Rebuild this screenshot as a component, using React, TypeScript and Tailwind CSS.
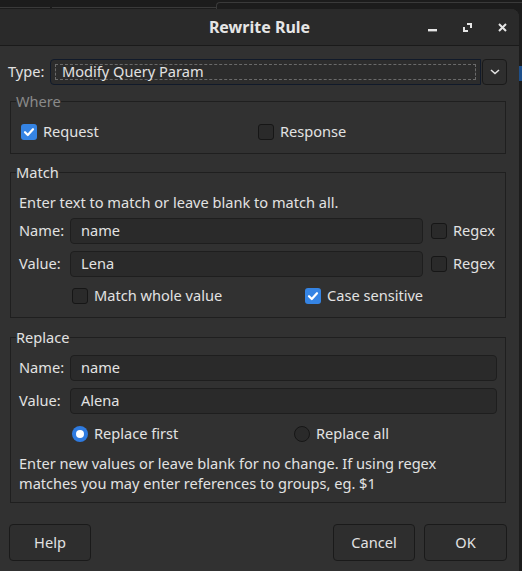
import React from 'react';

const font = { fontFamily: '"Noto Sans", "Open Sans", sans-serif' };

const CheckBox: React.FC<{ checked?: boolean }> = ({ checked }) =>
  checked ? (
    <span className="flex h-[16px] w-[16px] shrink-0 items-center justify-center rounded-[3px] bg-[#3584e4]">
      <svg width="12" height="12" viewBox="0 0 12 12">
        <path d="M2 6.2 L4.8 9 L10 3.2" fill="none" stroke="#ffffff" strokeWidth="2.2" strokeLinecap="round" strokeLinejoin="round" />
      </svg>
    </span>
  ) : (
    <span className="h-[16px] w-[16px] shrink-0 rounded-[3px] border border-[#161616] bg-[#2a2a2a]" />
  );

const Radio: React.FC<{ checked?: boolean }> = ({ checked }) =>
  checked ? (
    <span className="flex h-[16px] w-[16px] shrink-0 items-center justify-center rounded-full bg-[#2f7be0]">
      <span className="h-[8px] w-[8px] rounded-full bg-white" />
    </span>
  ) : (
    <span className="h-[16px] w-[16px] shrink-0 rounded-full border border-[#161616] bg-[#2a2a2a]" />
  );

const Field: React.FC<{ value: string; className: string }> = ({ value, className }) => (
  <div className={`flex h-[26px] items-center rounded-[4px] border border-[#1e1e1e] bg-[#2a2a2a] pl-[10px] ${className}`}>
    {value}
  </div>
);

const Group: React.FC<{ title: string; dim?: boolean; className?: string; children: React.ReactNode }> = ({ title, dim, className, children }) => (
  <fieldset className={`ml-[10px] w-[496px] border border-[#1f1f1f] ${className ?? ''}`}>
    <legend className={`ml-[5px] px-0 leading-[19px] ${dim ? 'text-[#8a8a8a]' : 'text-[#e2e2e2]'}`}>{title}</legend>
    {children}
  </fieldset>
);

export default function App() {
  return (
    <div className="flex h-[571px] w-[522px] flex-col overflow-hidden bg-[#1c1c1c] text-[14.6px] text-[#e2e2e2]" style={font}>
      {/* window behind */}
      <div className="flex h-[9px] shrink-0">
        <div className="mt-[7px] h-px w-[50px] bg-[#3a3a3a]" />
        <div className="ml-[2px] mt-[7px] h-px w-[164px] bg-[#3a3a3a]" />
        <div className="mt-[2px] h-[7px] flex-1 rounded-tl-[4px] border-l border-t border-[#3a3a3a]" />
      </div>

      <div className="flex min-h-0 flex-1">
        <div className="flex w-[519px] flex-col overflow-hidden rounded-tr-[8px] bg-[#313131]">
          {/* title bar */}
          <div className="relative flex h-[37px] shrink-0 items-center justify-center border-b border-[#1a1a1a] bg-[#2a2a2a]">
            <span className="text-[16px] font-bold text-[#e6e6e6]">Rewrite Rule</span>
            <div className="absolute right-[12px] top-0 flex h-[36px] items-center gap-[26px]">
              <svg width="9" height="9" viewBox="0 0 9 9">
                <rect x="0" y="6" width="9" height="2.4" fill="#e6e6e6" />
              </svg>
              <svg width="9" height="9" viewBox="0 0 9 9">
                <path d="M4 1 H8 V5" fill="none" stroke="#e6e6e6" strokeWidth="2" />
                <path d="M1 4 V8 H5" fill="none" stroke="#e6e6e6" strokeWidth="2" />
              </svg>
              <svg width="9" height="9" viewBox="0 0 9 9">
                <path d="M1 1 L8 8 M8 1 L1 8" stroke="#e6e6e6" strokeWidth="2" />
              </svg>
            </div>
          </div>

          {/* type row */}
          <div className="mt-[13px] flex h-[26px] items-center pl-[8px]">
            <span className="w-[42px]">Type:</span>
            <div className="flex h-[26px] w-[431px] items-center rounded-l-[4px] border border-[#111a2a] bg-[#2c2c2c] px-[4px]">
              <div className="flex h-[16px] flex-1 items-center border border-dashed border-[#6a6a6a] pl-[6px]">
                Modify Query Param
              </div>
            </div>
            <div className="ml-px flex h-[26px] w-[25px] items-center justify-center rounded-[4px] border border-[#1a1a1a] bg-[#2e2e2e]">
              <svg width="10" height="6" viewBox="0 0 10 6">
                <path d="M1 1 L5 4.5 L9 1" fill="none" stroke="#e2e2e2" strokeWidth="1.6" />
              </svg>
            </div>
          </div>

          {/* where */}
          <Group title="Where" dim className="mt-[7px]">
            <div className="flex h-[42px] items-center pl-[10px]">
              <label className="flex w-[237px] items-center gap-[6px]">
                <CheckBox checked />
                Request
              </label>
              <label className="flex items-center gap-[6px]">
                <CheckBox />
                Response
              </label>
            </div>
          </Group>

          {/* match */}
          <Group title="Match" className="mt-[9px]">
            <div className="flex flex-col px-[8px] pb-[12px] pt-[10px]">
              <div className="leading-[20px]">Enter text to match or leave blank to match all.</div>
              <div className="mt-[6px] flex items-center">
                <span className="w-[51px]">Name:</span>
                <Field value="name" className="w-[353px]" />
                <label className="ml-[8px] flex items-center gap-[6px]">
                  <CheckBox />
                  Regex
                </label>
              </div>
              <div className="mt-[7px] flex items-center">
                <span className="w-[51px]">Value:</span>
                <Field value="Lena" className="w-[353px]" />
                <label className="ml-[8px] flex items-center gap-[6px]">
                  <CheckBox />
                  Regex
                </label>
              </div>
              <div className="mt-[10px] flex h-[18px] items-center pl-[53px]">
                <label className="flex w-[233px] items-center gap-[6px]">
                  <CheckBox />
                  Match whole value
                </label>
                <label className="flex items-center gap-[6px]">
                  <CheckBox checked />
                  Case sensitive
                </label>
              </div>
            </div>
          </Group>

          {/* replace */}
          <Group title="Replace" className="mt-[10px]">
            <div className="flex flex-col px-[8px] pb-[9px] pt-[8px]">
              <div className="flex items-center">
                <span className="w-[51px]">Name:</span>
                <Field value="name" className="w-[427px]" />
              </div>
              <div className="mt-[7px] flex items-center">
                <span className="w-[51px]">Value:</span>
                <Field value="Alena" className="w-[427px]" />
              </div>
              <div className="mt-[11px] flex h-[18px] items-center pl-[53px]">
                <label className="flex w-[222px] items-center gap-[6px]">
                  <Radio checked />
                  Replace first
                </label>
                <label className="flex items-center gap-[6px]">
                  <Radio />
                  Replace all
                </label>
              </div>
              <p className="mt-[10px] leading-[20px]">
                Enter new values or leave blank for no change. If using regex
                <br />
                matches you may enter references to groups, eg. $1
              </p>
            </div>
          </Group>

          {/* buttons */}
          <div className="mt-[21px] flex pl-[9px] pr-[12px]">
            <button className="h-[37px] w-[82px] rounded-[4px] border border-[#1a1a1a] bg-[#2e2e2e]">Help</button>
            <button className="ml-auto h-[37px] w-[82px] rounded-[4px] border border-[#1a1a1a] bg-[#2e2e2e]">Cancel</button>
            <button className="ml-[9px] h-[37px] w-[83px] rounded-[4px] border border-[#1a1a1a] bg-[#2e2e2e]">OK</button>
          </div>
        </div>
        <div className="flex-1 bg-[#1c1c1c]">
          <div className="mt-[57px] h-[15px] w-full bg-[#1d4f8a]" />
        </div>
      </div>
    </div>
  );
}
